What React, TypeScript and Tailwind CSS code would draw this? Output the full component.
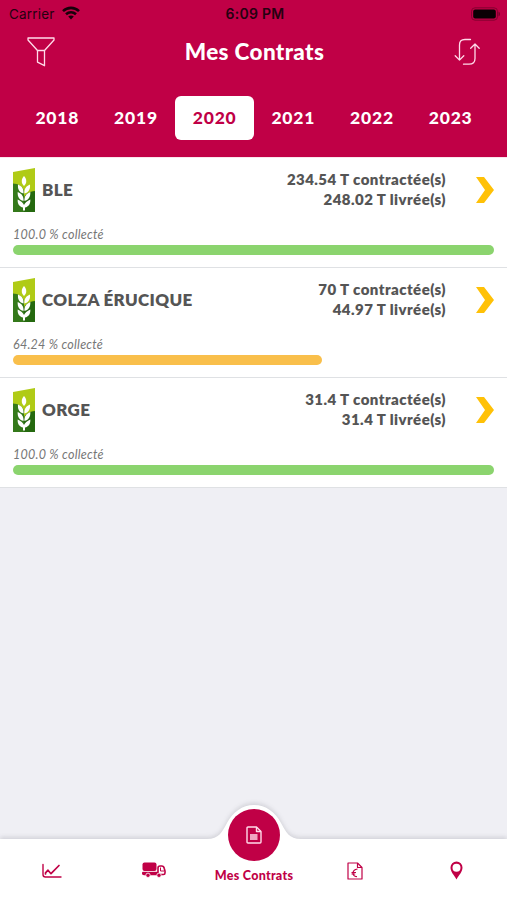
import clsx from 'clsx';

type Contract = {
  name: string;
  contracted: string;
  delivered: string;
  percent: string;
  progress: number;
};

const years = ['2018', '2019', '2020', '2021', '2022', '2023'];
const selectedYear = '2020';

const contracts: Contract[] = [
  { name: 'BLE', contracted: '234.54', delivered: '248.02', percent: '100.0', progress: 100 },
  { name: 'COLZA ÉRUCIQUE', contracted: '70', delivered: '44.97', percent: '64.24', progress: 64.24 },
  { name: 'ORGE', contracted: '31.4', delivered: '31.4', percent: '100.0', progress: 100 }
];

const StatusBar = () => (
  <div className="grid h-7 grid-cols-[1fr_auto_1fr] items-center pr-[6px] pl-[9px] font-['Inter',sans-serif] text-[13.5px] text-[#250010]">
    <div className="flex items-center gap-[7px]">
      <span className="tracking-[0.2px]">Carrier</span>
      <svg className="-mt-0.5" width="18" height="14" viewBox="0 0 18 14" fill="none" stroke="#18000a" strokeWidth="2.6">
        <path d="M1 5.1c4.6-4.3 11.4-4.3 16 0" />
        <path d="M4 8.3c2.9-2.6 7.1-2.6 10 0" />
        <path d="M9 13.4 6.2 10.6c1.6-1.5 4-1.5 5.6 0Z" fill="#18000a" stroke="none" />
      </svg>
    </div>
    <span className="-mt-px text-center text-[14px] font-semibold tracking-[0.3px] whitespace-nowrap">6:09 PM</span>
    <svg className="-mt-px justify-self-end" width="30" height="14" viewBox="0 0 30 14">
      <rect x="0.5" y="0.8" width="26" height="12.4" rx="3.5" fill="none" stroke="#850030" />
      <rect x="2.2" y="2.5" width="22.6" height="9" rx="2" fill="#0b0004" />
      <path d="M27.5 4.5c2 1 2 4 0 5Z" fill="#75002a" />
    </svg>
  </div>
);

const FilterIcon = () => (
  <svg width="28" height="30" viewBox="0 0 28 30" fill="none" stroke="#ffdbea" strokeWidth="1.3" strokeLinejoin="round">
    <path d="M1 1h26v2l-9.500 10.500h-7L1 3Z" />
    <path d="M10.500 13.500v11.700l7 3.500V13.500" />
  </svg>
);

const SwapIcon = () => (
  <svg width="26" height="28" viewBox="0 0 26 28" fill="none" stroke="#ffdbea" strokeWidth="1.3" strokeLinecap="round" strokeLinejoin="round">
    <path d="M16.500 1.500H11Q5.500 1.500 5.500 7v15M1.200 17.800l4.300 4.300 4.300-4.300" />
    <path d="M9.500 26.200H15q6 0 6-5.700V6M16.700 10.200 21 6l4.200 4.200" />
  </svg>
);

const WheatIcon = () => (
  <svg className="shrink-0" width="22" height="44" viewBox="0 0 22 44">
    <path d="M0 4 22 0v44H0Z" fill="#b0cb16" />
    <path d="M0 15.500c5 .2 9 2.500 11 7V44H0Z" fill="#34791a" />
    <path d="M11 30c1-4 5-6.500 11-7v21H11Z" fill="#25690f" />
    <g fill="#fff">
      <path d="M11 8c3 3.300 3 7 0 10-3-3-3-6.700 0-10Z" />
      <path d="M10.500 25.500C6.500 24.500 4.500 21.500 5 16.500c4 1.500 6 4.500 5.500 9ZM11.500 25.500c4-1 6-4 5.500-9-4 1.500-6 4.500-5.500 9Z" />
      <path d="M10.500 33C6.500 32 4.300 29 4.700 24c4 1.500 6.200 4.500 5.800 9ZM11.500 33c4-1 6.200-4 5.800-9-4 1.500-6.200 4.500-5.800 9Z" />
      <path d="M10 42.500v-3C6.500 38.800 4.300 36 4.700 31.500c3.200 1.300 5.400 3.500 6.300 5.500.9-2 3.100-4.200 6.300-5.500.4 4.500-1.800 7.300-5.300 8v3Z" />
    </g>
  </svg>
);

const ContractRow = ({ contract }: { contract: Contract }) => (
  <div className="h-[110px] border-b border-[#dfe1e4] bg-white px-[13px] pt-[9px]">
    <div className="flex h-[46px] items-center">
      <WheatIcon />
      <h2 className="ml-[7px] grow text-[17px] font-extrabold tracking-[0.35px] whitespace-nowrap text-[#555]">{contract.name}</h2>
      <div className="-mt-[3px] mr-[30px] text-right text-[15px] leading-5 font-extrabold tracking-[0.44px] whitespace-nowrap text-[#555]">
        <p>{contract.contracted} T contractée(s)</p>
        <p>{contract.delivered} T livrée(s)</p>
      </div>
      <svg width="18" height="26" viewBox="0 0 18 26">
        <path d="M0 0h8l10 13L8 26H0l9-13Z" fill="#ffc107" />
      </svg>
    </div>
    <p className="mt-[13px] h-[19px] text-[12.5px] leading-[18px] tracking-[0.25px] text-[#777] italic">{contract.percent} % collecté</p>
    <div className="h-[10px]">
      <div
        className={clsx('h-full rounded-full', contract.progress < 100 ? 'bg-[#f9bf4b]' : 'bg-[#8bd46e]')}
        style={{ width: `${contract.progress}%` }}
      />
    </div>
  </div>
);

const ChartIcon = () => (
  <svg width="20" height="16" viewBox="0 0 20 16" fill="none" stroke="#c00046" strokeLinecap="round" strokeLinejoin="round">
    <path d="M1 1.500v10Q1 14 3.500 14H19" strokeWidth="1.4" />
    <path d="M3.500 11V9.800L6 7.200l3 3.500 8-8.200" strokeWidth="1.7" />
  </svg>
);

const TruckIcon = () => (
  <svg width="24" height="16" viewBox="0 0 24 16">
    <rect x="0.5" y="0.5" width="14" height="8.5" rx="2" fill="#c00046" />
    <path d="M.8 10.300v1.200q0 1 1.200 1h14V6q0-2 2-2h1.800q2 0 2.500 2.500l.7 2.700v1.800q0 1.500-1.500 1.500h-6" fill="none" stroke="#c00046" strokeWidth="1.6" />
    <path d="M.5 9.800h16v2.400H.5Z" fill="#c00046" />
    <path d="M18.500 5.500V9H22" fill="none" stroke="#c00046" />
    <circle cx="6" cy="13.300" r="2.200" fill="#c00046" stroke="#fff" strokeWidth="0.8" />
    <circle cx="17" cy="13.300" r="2.200" fill="#c00046" stroke="#fff" strokeWidth="0.8" />
  </svg>
);

const InvoiceIcon = () => (
  <svg width="16" height="18" viewBox="0 0 16 18" fill="none" stroke="#c00046" strokeWidth="1.2" strokeLinejoin="round">
    <path d="M1 1h9.500L15 5.500V17H1Z" />
    <path d="M10.500 1v4.500H15" />
    <path d="M10.500 7C7.500 7.500 6 9 6 11s1.500 4 4 3.500M4.500 10.500H9M4.500 12h3.700" />
  </svg>
);

const PinIcon = () => (
  <svg width="13" height="19" viewBox="0 0 13 19">
    <path d="M6.500.5a6 6 0 0 0-6 6c0 4.300 3.500 7.500 6 12 2.500-4.500 6-7.700 6-12a6 6 0 0 0-6-6Zm0 2.300a4 4 0 1 1 0 8 4 4 0 0 1 0-8Z" fill="#c00046" fillRule="evenodd" />
  </svg>
);

const DocumentIcon = () => (
  <svg width="16" height="18" viewBox="0 0 16 18" fill="none" stroke="#ffdbea" strokeWidth="1.4" strokeLinejoin="round">
    <path d="M2 1h8.500L15 5.500V16q0 1-1 1H2q-1 0-1-1V2q0-1 1-1Z" />
    <path d="M10.500 1v4.500H15" />
    <path d="M4 9h7.500M4 11h7.500M4 13h7.500" />
  </svg>
);

const BottomNav = () => (
  <nav className="relative h-[61px] bg-white">
    {/* Raised notch behind the active item */}
    <svg className="absolute inset-x-0 -top-10 drop-shadow-[0_-2px_2px_rgba(40,40,55,0.14)]" width="507" height="101" viewBox="0 0 507 101">
      <path d="M0 40h207c12 0 15-7 20-16 6-11 15-18 27-18s21 7 27 18c5 9 8 16 20 16h206v61H0Z" fill="#fff" />
    </svg>
    <div className="relative grid h-full grid-cols-[103px_101px_100px_101px_102px] justify-items-center">
      <div className="pt-[24px]"><ChartIcon /></div>
      <div className="pt-[23px]"><TruckIcon /></div>
      <div className="-mt-[30px] flex flex-col items-center">
        <div className="flex size-[52px] shrink-0 items-center justify-center rounded-full bg-[#c00046]">
          <DocumentIcon />
        </div>
        <span className="mt-[7px] text-[12.5px] leading-4 font-black tracking-[0.28px] whitespace-nowrap text-[#c00046]">Mes Contrats</span>
      </div>
      <div className="pt-[23px]"><InvoiceIcon /></div>
      <div className="pt-[22px]"><PinIcon /></div>
    </div>
  </nav>
);

const App = () => {
  return (
    <div className="flex h-[900px] w-[507px] flex-col overflow-hidden bg-[#efeff4] font-['Lato',sans-serif]">
      <header className="h-[157px] shrink-0 bg-[#c00046]">
        <StatusBar />
        <div className="flex h-12 items-center justify-between px-[27px]">
          <FilterIcon />
          <h1 className="text-[22.5px] font-black tracking-[0.35px] text-white">Mes Contrats</h1>
          <SwapIcon />
        </div>
        <div className="mt-5 mr-[17px] ml-[18px] grid h-11 grid-cols-6">
          {years.map((year) => (
            <button
              key={year}
              className={clsx(
                'rounded-md text-[17.5px] font-black tracking-[0.8px]',
                year === selectedYear ? 'bg-white text-[#c00046]' : 'text-white'
              )}
            >
              {year}
            </button>
          ))}
        </div>
      </header>
      <main className="grow border-t border-[#fbe4ec]">
        {contracts.map((contract) => (
          <ContractRow key={contract.name} contract={contract} />
        ))}
      </main>
      <BottomNav />
    </div>
  );
};

export default App;
